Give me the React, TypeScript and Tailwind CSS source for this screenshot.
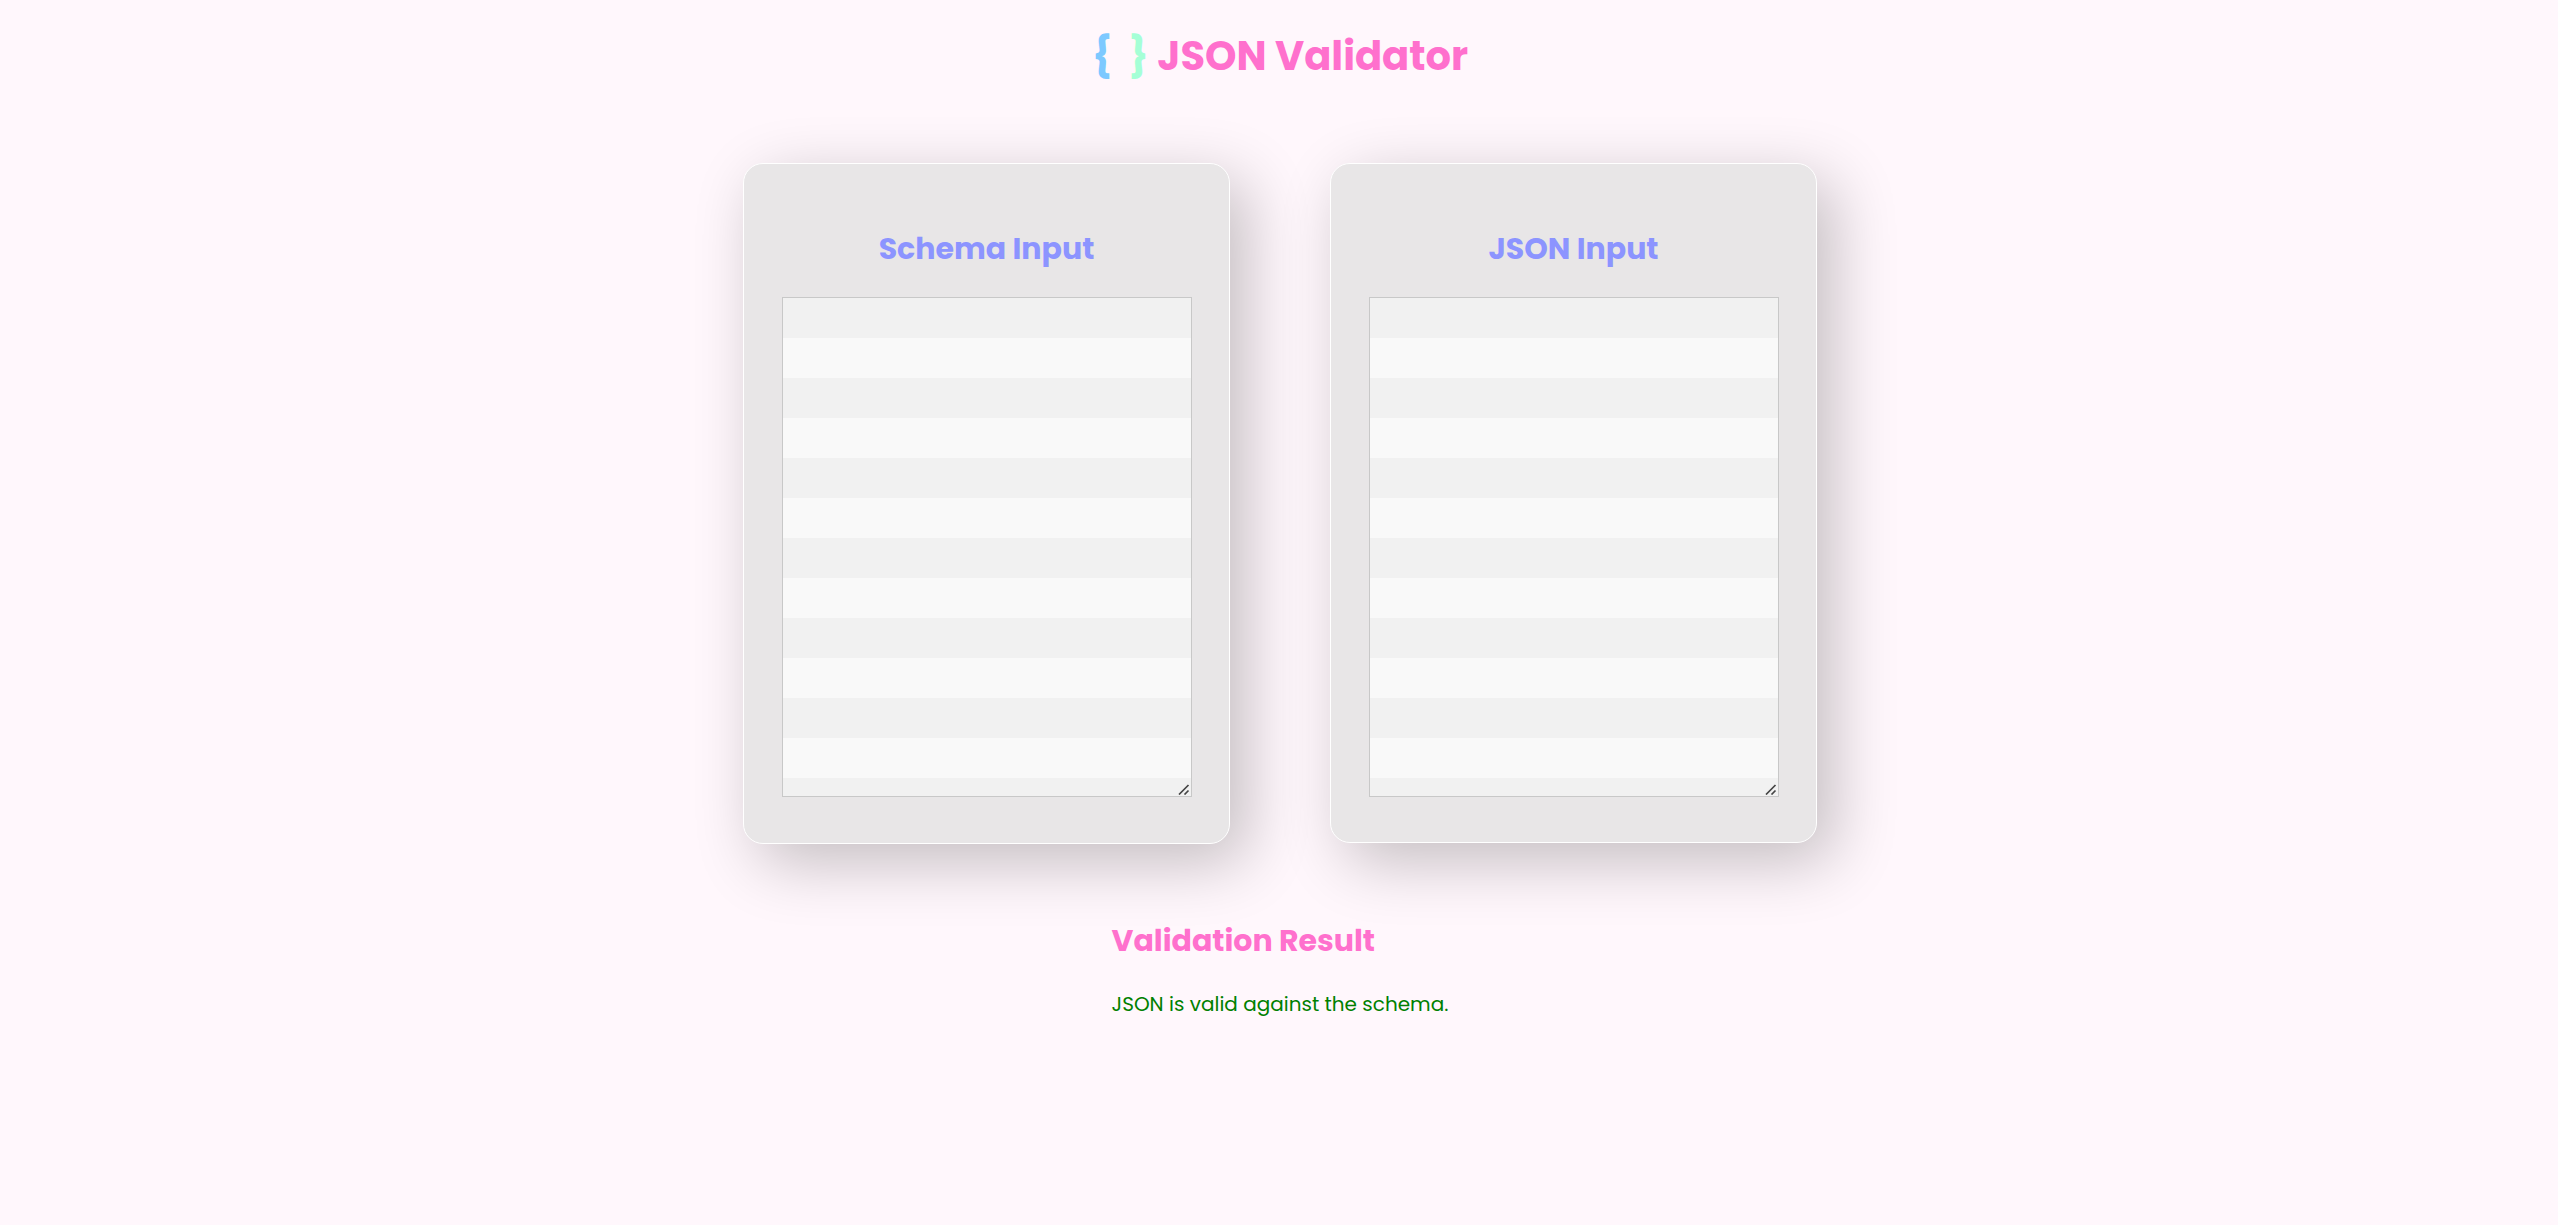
type PanelProps = { title: string; className: string };

function Panel({ title, className }: PanelProps) {
  return (
    <section
      className={`flex w-[487px] flex-col items-center rounded-[20px] border border-white bg-[#e8e6e7] px-[38px] shadow-[16px_18px_64px_rgba(0,0,0,0.24)] ${className}`}
    >
      <h2 className="mt-[62px] h-[45px] text-[30px] font-bold leading-[45px] whitespace-nowrap text-[#8c94ff]">
        {title}
      </h2>
      <div className="relative mt-[26px] h-[500px] w-[410px]">
        <textarea
          aria-label={title}
          className="block h-full w-full resize-none border border-[#c8c8c8] bg-[repeating-linear-gradient(#f1f1f1_0px,#f1f1f1_40px,#f9f9f9_40px,#f9f9f9_80px)] outline-none"
        />
        <svg
          className="pointer-events-none absolute right-[2px] bottom-[2px]"
          width="12"
          height="11"
          viewBox="0 0 12 11"
          stroke="#454545"
          strokeWidth="1.7"
          aria-hidden="true"
        >
          <path d="M1 10.500L10.500 1M6.500 10.500L10.500 6.500" />
        </svg>
      </div>
    </section>
  );
}

export default function App() {
  return (
    <div className="flex min-h-[1225px] flex-col items-center bg-[#fff7fc] pl-[2px] font-['Poppins','Inter',sans-serif] [font-feature-settings:'cv11']">
      <header className="h-[163px] pt-[26px]">
        <h1 className="h-[60px] text-[40px] font-bold leading-[60px] whitespace-pre text-[#ff70cd]">
          <span className="text-[#7dc9ff]">{'{ '}</span>
          <span className="text-[#a5ffd6]">{' }'}</span>
          {' JSON Validator'}
        </h1>
      </header>
      <main className="flex items-start gap-[100px]">
        <Panel title="Schema Input" className="h-[681px]" />
        <Panel title="JSON Input" className="h-[680px]" />
      </main>
      <section className="mt-[74px] w-fit">
        <h2 className="h-[45px] text-[30px] font-bold leading-[45px] whitespace-nowrap text-[#ff70cd]">Validation Result</h2>
        <p className="mt-[26px] h-[30px] text-[20px] leading-[30px] whitespace-nowrap text-[#008000]">JSON is valid against the schema.</p>
      </section>
    </div>
  );
}
